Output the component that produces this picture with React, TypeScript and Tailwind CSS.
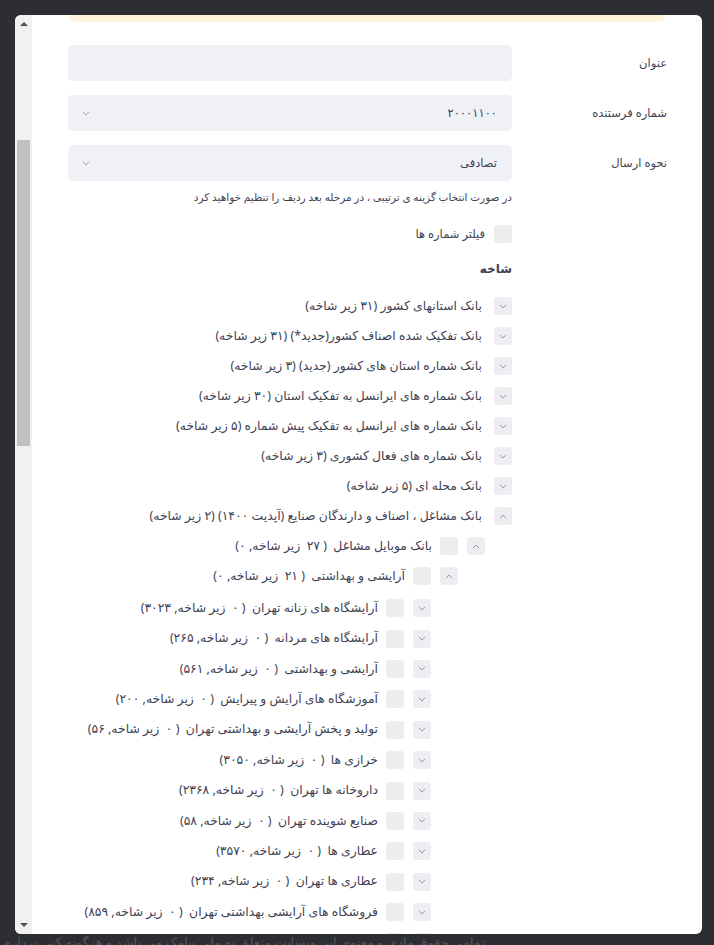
import React from 'react';

type Node = { label: string; level: number; open?: boolean };

const tree: Node[] = [
  { label: 'بانک استانهای کشور (۳۱ زیر شاخه)', level: 0 },
  { label: 'بانک تفکیک شده اصناف کشور(جدید*) (۳۱ زیر شاخه)', level: 0 },
  { label: 'بانک شماره استان های کشور (جدید) (۳ زیر شاخه)', level: 0 },
  { label: 'بانک شماره های ایرانسل به تفکیک استان (۳۰ زیر شاخه)', level: 0 },
  { label: 'بانک شماره های ایرانسل به تفکیک پیش شماره (۵ زیر شاخه)', level: 0 },
  { label: 'بانک شماره های فعال کشوری (۳ زیر شاخه)', level: 0 },
  { label: 'بانک محله ای (۵ زیر شاخه)', level: 0 },
  { label: 'بانک مشاغل ، اصناف و دارندگان صنایع (آپدیت ۱۴۰۰) (۲ زیر شاخه)', level: 0, open: true },
  { label: 'بانک موبایل مشاغل  ( ۲۷  زیر شاخه, ۰)', level: 1, open: true },
  { label: 'آرایشی و بهداشتی  ( ۲۱  زیر شاخه, ۰)', level: 2, open: true },
  { label: 'آرایشگاه های زنانه تهران  ( ۰  زیر شاخه, ۳۰۲۳)', level: 3 },
  { label: 'آرایشگاه های مردانه  ( ۰  زیر شاخه, ۲۶۵)', level: 3 },
  { label: 'آرایشی و بهداشتی  ( ۰  زیر شاخه, ۵۶۱)', level: 3 },
  { label: 'آموزشگاه های آرایش و پیرایش  ( ۰  زیر شاخه, ۲۰۰)', level: 3 },
  { label: 'تولید و پخش آرایشی و بهداشتی تهران  ( ۰  زیر شاخه, ۵۶)', level: 3 },
  { label: 'خرازی ها  ( ۰  زیر شاخه, ۳۰۵۰)', level: 3 },
  { label: 'داروخانه ها تهران  ( ۰  زیر شاخه, ۲۳۶۸)', level: 3 },
  { label: 'صنایع شوینده تهران  ( ۰  زیر شاخه, ۵۸)', level: 3 },
  { label: 'عطاری ها  ( ۰  زیر شاخه, ۳۵۷۰)', level: 3 },
  { label: 'عطاری ها تهران  ( ۰  زیر شاخه, ۲۳۴)', level: 3 },
  { label: 'فروشگاه های آرایشی بهداشتی تهران  ( ۰  زیر شاخه, ۸۵۹)', level: 3 },
  { label: 'لوازم آرایشی و بهداشتی تهران  ( ۰  زیر شاخه, ۱۲۰)', level: 3 },
];

const rowStyle = [
  'h-[30px] pr-0',
  'h-[30px] pr-[27px]',
  'h-[30px] pr-[54px] mb-[2px]',
  'h-[30.4px] pr-[81px]',
];

const Chevron = ({ up = false }: { up?: boolean }) => (
  <svg width="8" height="5" viewBox="0 0 8 5" fill="none">
    <polyline
      points={up ? '1,4.2 4,1 7,4.2' : '1,0.8 4,4 7,0.8'}
      stroke="#8d8f9c"
      strokeWidth="0.9"
    />
  </svg>
);

const TreeRow = ({ node }: { node: Node }) => (
  <div className={`flex items-center ${rowStyle[node.level]}`}>
    <span className="flex h-[18px] w-[18px] items-center justify-center rounded-[3px] bg-[#eeeef2]">
      <Chevron up={node.open} />
    </span>
    {node.level > 0 && <span className="mr-[9px] h-[18px] w-[18px] rounded-[3px] bg-[#ededf0]" />}
    <span className={`${node.level > 0 ? 'mr-[8px]' : 'mr-[12px]'} whitespace-pre text-[12.4px] text-[#3f4254]`}>
      {node.label}
    </span>
  </div>
);

const Field = ({ label, value, select }: { label: string; value?: string; select?: boolean }) => (
  <div className="flex items-center">
    <div className="w-[155px] shrink-0 text-[11.5px] text-[#3f4254]">{label}</div>
    <div className="flex h-[36px] w-[444px] items-center justify-between rounded-[5px] bg-[#f0f1f6] pl-[14px] pr-[15px]">
      <span className="text-[11.5px] text-[#3f4254]">{value}</span>
      {select && (
        <svg width="8" height="5" viewBox="0 0 8 5" fill="none">
          <polyline points="1,0.8 4,4 7,0.8" stroke="#9a9cab" strokeWidth="0.9" />
        </svg>
      )}
    </div>
  </div>
);

export default function App() {
  return (
    <div
      className="h-[945px] w-[714px] overflow-hidden bg-[#2d2e33]"
      style={{ fontFamily: '"Noto Sans", "DejaVu Sans", sans-serif' }}
    >
      <div className="ml-[15px] mt-[15px] flex h-[919px] w-[687px] overflow-hidden rounded-md bg-white">
        {/* scrollbar */}
        <div className="flex w-[17px] shrink-0 flex-col items-center bg-[#f1f1f1]">
          <div className="mt-[7px] h-0 w-0 border-x-[4px] border-b-[4px] border-x-transparent border-b-[#505050]" />
          <div className="mt-[114px] h-[306px] w-[13px] bg-[#c1c1c1]" />
          <div className="mt-auto mb-[7px] h-0 w-0 border-x-[4px] border-t-[4px] border-x-transparent border-t-[#505050]" />
        </div>

        <div dir="rtl" className="flex-1 overflow-hidden pl-[36px] pr-[35px]">
          <div className="mr-[2px] h-[7px] rounded-b-md bg-[#fff4de]" />

          <div className="mt-[23px] flex flex-col gap-[14px]">
            <Field label="عنوان" />
            <Field label="شماره فرستنده" value="۲۰۰۰۱۱۰۰" select />
            <Field label="نحوه ارسال" value="تصادفی" select />
          </div>

          <div className="mr-[155px]">
            <p className="mt-[8px] text-[10.5px] leading-[16px] text-[#3f4254]">
              در صورت انتخاب گزینه ی ترتیبی ، در مرحله بعد ردیف را تنظیم خواهید کرد
            </p>

            <label className="mt-[20px] flex items-center gap-[9px]">
              <span className="h-[18px] w-[18px] rounded-[3px] bg-[#ededf0]" />
              <span className="text-[11.5px] text-[#3f4254]">فیلتر شماره ها</span>
            </label>

            <h3 className="mt-[16px] text-[12px] font-bold leading-[20px] text-[#3f4254]">شاخه</h3>

            <div className="mt-[12px]">
              {tree.map((n, i) => (
                <TreeRow key={i} node={n} />
              ))}
            </div>
          </div>
        </div>
      </div>

      <div dir="rtl" className="pr-[229px] whitespace-nowrap text-[13px] leading-[16px] text-[#55565b]">
        تمامی حقوق مادی و معنوی این وبسایت متعلق به ملی پیامک می باشد و هرگونه کپی برداری پیگرد قانونی دارد.
      </div>
    </div>
  );
}
